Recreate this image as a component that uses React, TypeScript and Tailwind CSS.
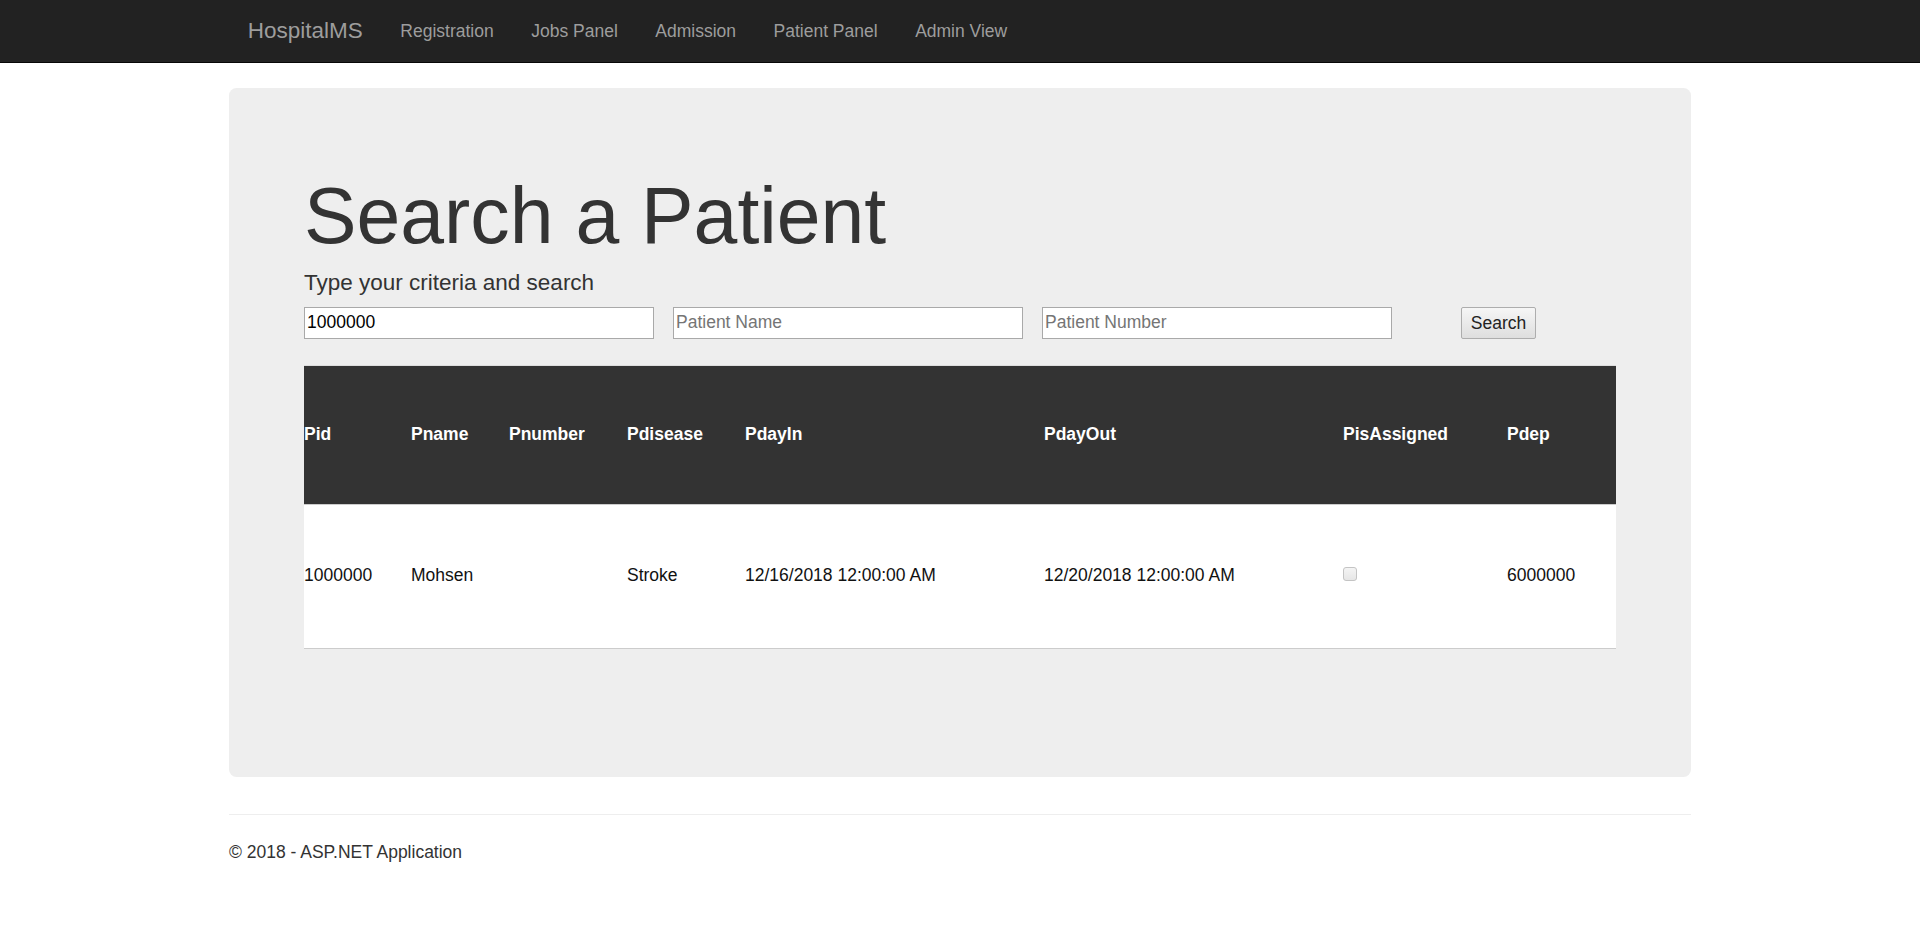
import React from "react";

const navLinks = ["Registration", "Jobs Panel", "Admission", "Patient Panel", "Admin View"];

const columns = [
  { name: "Pid", w: "w-[107px]" },
  { name: "Pname", w: "w-[98px]" },
  { name: "Pnumber", w: "w-[118px]" },
  { name: "Pdisease", w: "w-[118px]" },
  { name: "PdayIn", w: "w-[299px]" },
  { name: "PdayOut", w: "w-[299px]" },
  { name: "PisAssigned", w: "w-[164px]" },
  { name: "Pdep", w: "w-[109px]" },
];

const row = ["1000000", "Mohsen", "", "Stroke", "12/16/2018 12:00:00 AM", "12/20/2018 12:00:00 AM", null, "6000000"];

export default function App() {
  return (
    <div className="min-h-[952px] bg-white text-[#333] font-['Liberation_Sans',Arial,sans-serif] text-[17.5px]">
      {/* Navbar */}
      <nav className="h-[63px] bg-[#222] border-b border-[#080808]">
        <div className="mx-auto flex h-[62px] w-[1462px] items-center px-[18.75px]">
          <a className="pr-[18.75px] text-[22.5px] text-[#9d9d9d]">HospitalMS</a>
          {navLinks.map((l) => (
            <a key={l} className="px-[18.75px] text-[17.5px] text-[#9d9d9d]">
              {l}
            </a>
          ))}
        </div>
      </nav>

      <div className="mx-auto w-[1462px] pt-[25px]">
        {/* Jumbotron */}
        <div className="rounded-[7.5px] bg-[#eee] px-[75px] pt-[60px] pb-[60px]">
          <h1 className="mt-[25px] mb-[7px] text-[78.75px] leading-[1.1] text-[#333]">Search a Patient</h1>
          <p className="text-[22.5px] leading-[32px] text-[#333]">Type your criteria and search</p>

          <div className="mt-[8px] flex items-center">
            <input
              defaultValue="1000000"
              className="h-[32px] w-[350px] border border-[#a9a9a9] bg-white px-[2px] text-[17.5px] text-black outline-none"
            />
            <input
              placeholder="Patient Name"
              className="ml-[19px] h-[32px] w-[350px] border border-[#a9a9a9] bg-white px-[2px] text-[17.5px] text-black outline-none placeholder:text-[#757575]"
            />
            <input
              placeholder="Patient Number"
              className="ml-[19px] h-[32px] w-[350px] border border-[#a9a9a9] bg-white px-[2px] text-[17.5px] text-black outline-none placeholder:text-[#757575]"
            />
            <button className="ml-[69px] h-[32px] w-[75px] rounded-[2px] border border-[#adadad] bg-gradient-to-b from-[#f6f6f6] to-[#dedede] text-[17.5px] text-[#222]">
              Search
            </button>
          </div>

          <table className="mt-[26px] w-full table-fixed border-collapse">
            <thead>
              <tr className="h-[139px] border-t border-[#ddd] border-b border-b-[#ccc] bg-[#333]">
                {columns.map((c) => (
                  <th key={c.name} className={`${c.w} p-0 pb-[2px] text-left align-middle text-[17.5px] font-bold text-white`}>
                    {c.name}
                  </th>
                ))}
              </tr>
            </thead>
            <tbody>
              <tr className="h-[144px] border-b border-[#ccc] bg-white">
                {row.map((v, i) => (
                  <td key={i} className="p-0 pb-[3px] align-middle text-[17.5px] text-[#111]">
                    {v === null ? (
                      <div className="mb-[2px] h-[14px] w-[14px] rounded-[3px] border border-[#c4c4c4] bg-gradient-to-b from-[#f4f4f4] to-[#e6e6e6]" />
                    ) : (
                      v
                    )}
                  </td>
                ))}
              </tr>
            </tbody>
          </table>
          <div className="h-[68px]" />
        </div>

        {/* Footer */}
        <hr className="mt-[37px] border-t border-[#eee]" />
        <footer className="pt-[25px]">
          <p className="text-[17.5px] leading-[25px] text-[#333]">© 2018 - ASP.NET Application</p>
        </footer>
      </div>
    </div>
  );
}
